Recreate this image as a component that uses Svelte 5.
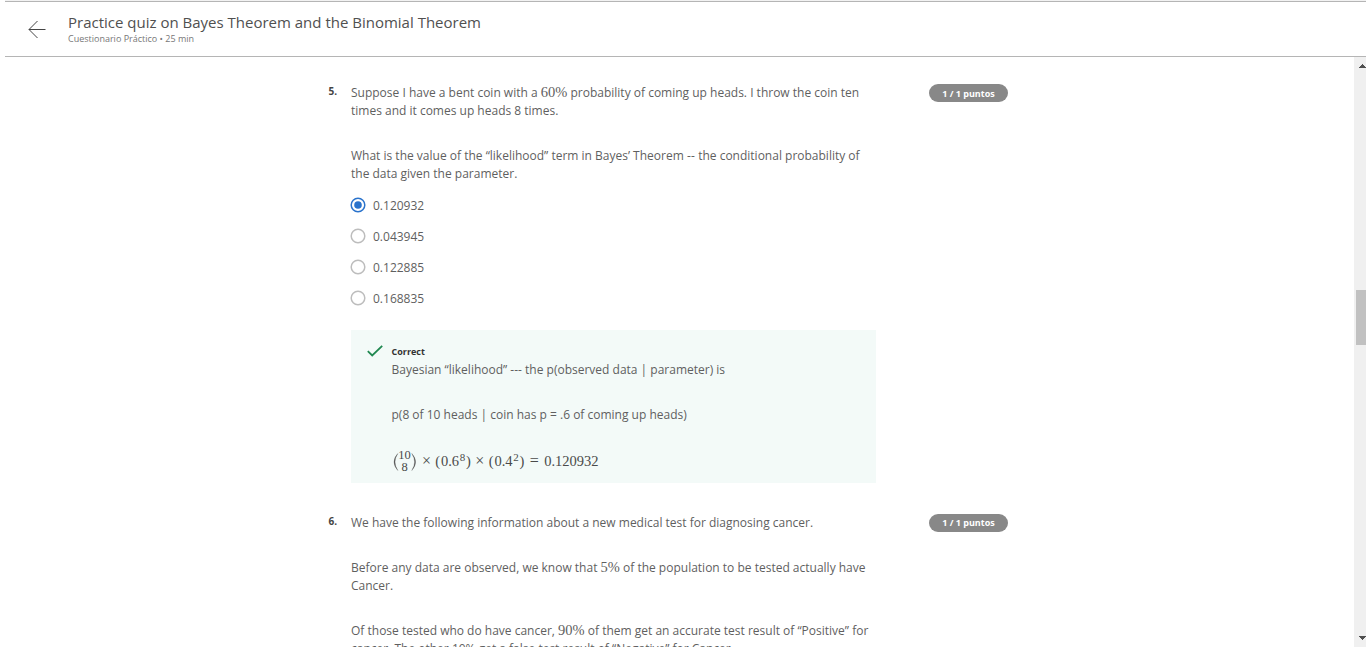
<script>
  const options = ['0.120932', '0.043945', '0.122885', '0.168835'];
  let selected = $state(0);
</script>

<div class="page">
  <header>
    <svg class="back" viewBox="0 0 18 18" width="18" height="18" aria-hidden="true">
      <path d="M17.5 9.5H1M9.5 1L1 9.5L9.5 18" />
    </svg>
    <div class="titles">
      <h1>Practice quiz on Bayes Theorem and the Binomial Theorem</h1>
      <div class="sub">Cuestionario Práctico • 25 min</div>
    </div>
  </header>

  <div class="body">
    <main>
      <section class="question">
        <div class="num">5.</div>
        <div class="content">
          <p>Suppose I have a bent coin with a <span class="math">60%</span> probability of coming up heads. I throw the coin ten<br />times and it comes up heads 8 times.</p>
          <p>What is the value of the “likelihood” term in Bayes’ Theorem <span class="dashes">--</span> the conditional probability of<br />the data given the parameter.</p>
          <div class="options">
            {#each options as option, i}
              <button class="option" class:on={selected === i} onclick={() => (selected = i)}>
                <svg class="radio" viewBox="0 0 16 16" width="16" height="16" aria-hidden="true">
                  <circle class="ring" cx="8" cy="8" r="6.8" />
                  {#if selected === i}<circle class="dot" cx="8" cy="8" r="3.8" />{/if}
                </svg>{option}
              </button>
            {/each}
          </div>
          <div class="feedback">
            <svg class="check" viewBox="0 0 16 12" width="16" height="12" aria-hidden="true">
              <path d="M0.8 6.2L5.2 10.4L15.2 0.8" />
            </svg>
            <div class="explain">
              <div class="correct">Correct</div>
              <p>Bayesian “likelihood” --- the p(observed data | parameter) is</p>
              <p>p(8 of 10 heads | coin has p = .6 of coming up heads)</p>
              <div class="formula">
                <svg class="paren" viewBox="0 0 7 20" width="7" height="20" aria-hidden="true"><path d="M5.8 1.5Q-1.8 10 5.8 18.5Q.2 10 5.8 1.5Z" /></svg>
                <span class="binom"><span>10</span><span>8</span></span>
                <svg class="paren" viewBox="0 0 7 20" width="7" height="20" aria-hidden="true"><path d="M.8 1.5Q8.4 10 .8 18.5Q6.4 10 .8 1.5Z" /></svg>
                <span class="op">×</span>
                <span class="group"><i>(</i>0.6<sup>8</sup><i>)</i></span>
                <span class="op">×</span>
                <span class="group"><i>(</i>0.4<sup>2</sup><i>)</i></span>
                <span class="op eq">=</span>
                <span>0.120932</span>
              </div>
            </div>
          </div>
        </div>
        <div class="points">1 / 1 puntos</div>
      </section>

      <section class="question">
        <div class="num">6.</div>
        <div class="content">
          <p>We have the following information about a new medical test for diagnosing cancer.</p>
          <p>Before any data are observed, we know that <span class="math">5%</span> of the population to be tested actually have<br />Cancer.</p>
          <p>Of those tested who do have cancer, <span class="math">90%</span> of them get an accurate test result of “Positive” for<br />cancer. The other 10% get a false test result of “Negative” for Cancer.</p>
        </div>
        <div class="points second">1 / 1 puntos</div>
      </section>
    </main>
    <div class="scrollbar">
      <svg class="up" viewBox="0 0 7 4" width="7" height="4" aria-hidden="true"><path d="M0 4V3H1V2H2V1H3V0H4V1H5V2H6V3H7V4Z" /></svg>
      <div class="thumb"></div>
      <svg class="down" viewBox="0 0 7 4" width="7" height="4" aria-hidden="true"><path d="M0 0V1H1V2H2V3H3V4H4V3H5V2H6V1H7V0Z" /></svg>
    </div>
  </div>
</div>

<style>
  :global(body) { margin: 0; background: #fff; overflow: hidden; }
  .page {
    display: flex; flex-direction: column; height: 647px; overflow: hidden; box-sizing: border-box;
    font: 400 12px/18px "Open Sans", sans-serif; color: #5f5f5f;
  }
  header {
    flex: none; display: flex; height: 56px; margin: 1px 0 0 5px; box-sizing: border-box;
    border-top: 1px solid #b5b5b5; border-bottom: 1px solid #b5b5b5; box-shadow: 0 -1px #f2f2f2;
  }
  .back { margin: 18px 0 0 22.5px; fill: none; stroke: #444; stroke-width: 1; }
  .titles { margin: 10px 0 0 22.5px; white-space: nowrap; }
  h1 { margin: 0; font-size: 15px; line-height: 21px; font-weight: 400; color: #505050; }
  .sub { font-size: 9px; line-height: 12px; color: #777; }
  .body { flex: 1; min-height: 0; display: flex; justify-content: space-between; }
  main { width: 1010px; padding: 27px 0 0 328px; box-sizing: border-box; }
  .question { display: flex; align-items: flex-start; height: 430px; }
  .num { width: 22.5px; padding-left: .5px; font-size: 10px; line-height: 15px; font-weight: 700; color: #444; }
  .content { width: 578px; }
  p { margin: 0 0 27px; white-space: nowrap; }
  .math { font-family: "Liberation Serif", serif; font-size: 14.5px; line-height: 0; }
  .dashes { letter-spacing: .2px; }
  .points {
    width: 79px; height: 18px; border-radius: 9px; background: #888; color: #fff;
    font-size: 9px; font-weight: 700; line-height: 19px; text-align: center;
  }
  .second { line-height: 17px; }
  .options { display: flex; flex-direction: column; gap: 13px; margin: -13px 0 0 -1px; }
  .option {
    display: flex; align-items: center; gap: 7px; height: 18px; padding: 0; border: 0; background: none;
    font: inherit; color: inherit;
  }
  .radio { margin-top: -2px; }
  .ring { fill: none; stroke: #bdbdbd; stroke-width: 1.5; }
  .dot { fill: #2a73cc; }
  .on .ring { stroke: #2a73cc; }
  .feedback { display: flex; width: 525px; height: 153px; box-sizing: border-box; margin-top: 22px; padding: 14px 0 0 16px; background: #f3faf8; }
  .check { margin-top: 1px; fill: none; stroke: #208850; stroke-width: 1.8; }
  .explain { padding-left: 8.5px; }
  .correct { font-size: 9px; line-height: 15px; height: 17px; font-weight: 700; color: #333; }
  .formula { display: flex; align-items: center; margin-top: -1px; height: 22px; font-family: "Liberation Serif", serif; font-size: 14.5px; white-space: nowrap; color: #4a4a4a; }
  .paren { fill: #555; stroke: #555; stroke-width: .3; flex: none; margin-top: 2px; }
  .binom { display: flex; flex-direction: column; align-items: center; width: 12px; font-size: 12.5px; line-height: 12px; }
  .op { width: 17.8px; text-align: center; font-size: 16px; }
  .eq { width: 19.7px; }
  .group { width: 35.7px; display: flex; justify-content: space-between; }
  i { font-style: normal; }
  sup { font-size: 11px; line-height: 11px; vertical-align: baseline; }
  .scrollbar { width: 12px; display: flex; flex-direction: column; align-items: flex-end; background: #f0f0f0; overflow: hidden; }
  .scrollbar svg { flex: none; fill: #505050; }
  .up { margin-top: 7px; }
  .thumb { flex: none; width: 10px; height: 55px; margin-top: 222px; background: #c1c1c1; }
  .down { margin-top: 291px; }
</style>
